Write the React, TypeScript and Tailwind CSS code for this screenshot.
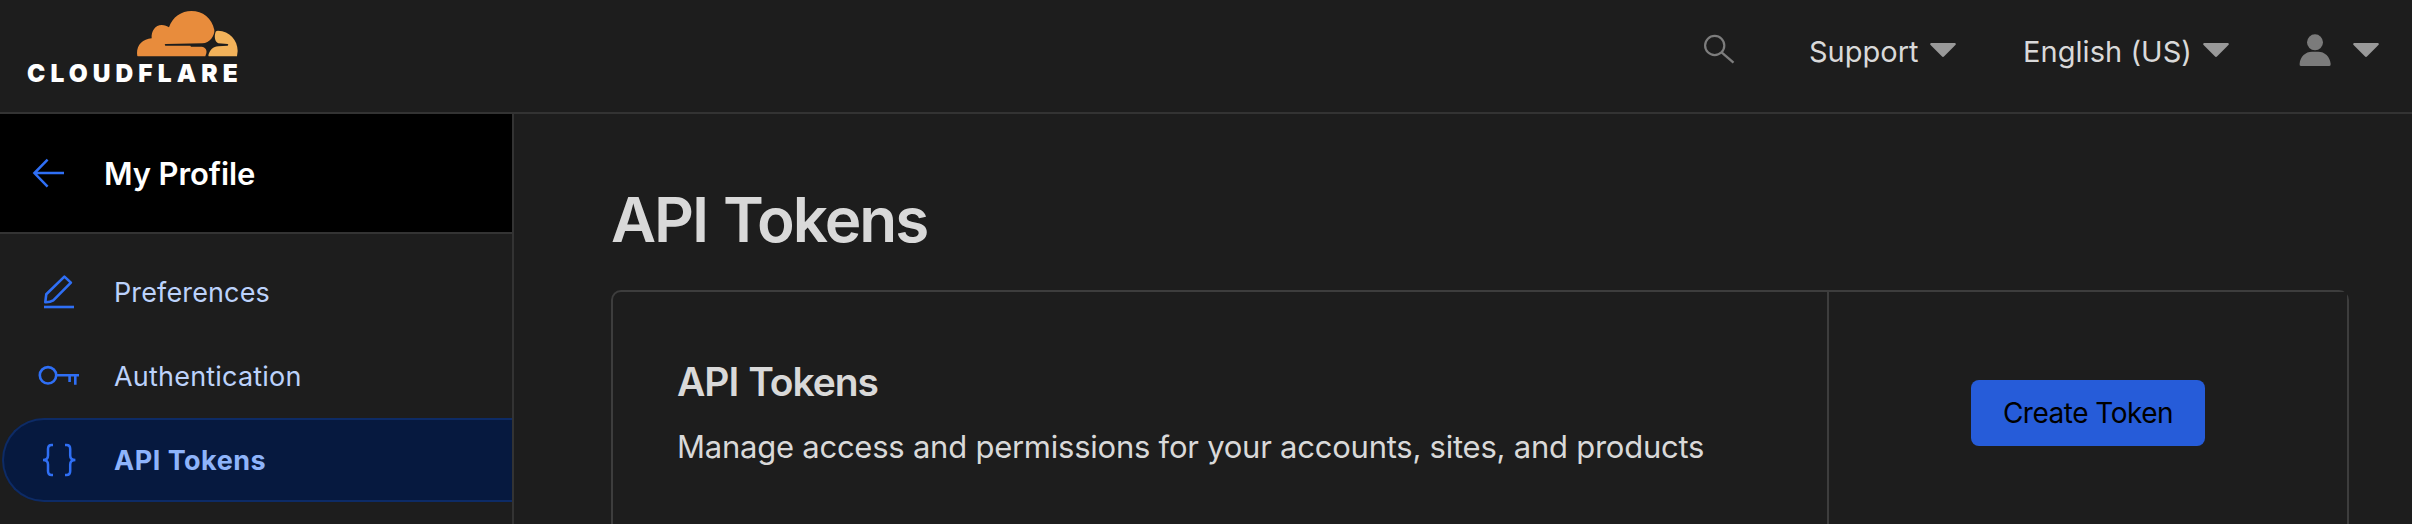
import React from "react";

function CloudLogo() {
  return (
    <div className="flex w-[250px] flex-col pt-[11px] pl-7">
      <svg className="ml-[109px] block h-[46px] w-[101px]" viewBox="412 33 303 138" aria-hidden="true">
        <path
          fill="#e88c3c"
          d="M415 169 Q412 169 412 160 C412 134 430 117 456 115 C454 93 467 75 486 75 C495 75 503 78 508 82 C518 51 546 33 575 33 C609 33 637 54 644 90 C646 106 630 130 608 130 L497 132 Q493 134.5 497 137 L572 137.5 L574 140 L606 140 C617 141 623 150 620 160 L617 169 Z"
        />
        <path
          fill="#f2b25a"
          d="M648 95 Q650 92 655 92 C690 93 714 120 714 153 L712 169 H627 L626 166 C631 149 640 140 656 139 L684 137 Q688 134.5 684 132 L656 130 C645 125 643 108 648 95 Z"
        />
      </svg>
      <span className="mt-[4px] -ml-px text-[24.5px] leading-[25px] font-black tracking-[5.1px] whitespace-nowrap text-white">
        CLOUDFLARE
      </span>
    </div>
  );
}

function Caret() {
  return (
    <svg className="h-[14px] w-[26px] shrink-0" viewBox="0 0 26 14" fill="#999999" aria-hidden="true">
      <path d="M1 0H25Q26.5 0.6 25.4 2L14.2 13.3Q13 14.5 11.8 13.3L0.6 2Q-0.5 0.6 1 0Z" />
    </svg>
  );
}

function PencilIcon() {
  return (
    <svg className="h-11 w-11" viewBox="38 270 44 44" fill="none" stroke="#2f6ff5" strokeWidth="2.6" strokeLinejoin="round">
      <path d="M45.3 302.2L46.3 294.2L64.4 276.6L70.9 282.6L53.3 300.4Q50 302.4 45.3 302.2Z" />
      <path d="M44 307H74" />
    </svg>
  );
}

function KeyIcon() {
  return (
    <svg className="h-11 w-11" viewBox="38 354 44 44" fill="none" stroke="#2f6ff5" strokeWidth="2.6">
      <circle cx="48" cy="375.3" r="8.2" />
      <path d="M56.5 375.2H79M69.6 375V382M75.3 375V384.7" />
    </svg>
  );
}

function BracesIcon() {
  return (
    <svg className="h-11 w-11" viewBox="38 438 44 44" fill="none" stroke="#2f6ff5" strokeWidth="2.5">
      <path d="M53 445H51.6Q48 445 48 449V455.5Q48 460 43 460Q48 460 48 464.5V471Q48 475 51.6 475H53" />
      <path d="M65 445H66.6Q70.2 445 70.2 449V455.5Q70.2 460 75.4 460Q70.2 460 70.2 464.5V471Q70.2 475 66.6 475H65" />
    </svg>
  );
}

function Header() {
  return (
    <header className="flex h-[114px] shrink-0 items-start justify-between border-b-2 border-[#333333]">
      <CloudLogo />
      <div className="flex h-[100px] items-center pr-[33px] text-[29px] leading-[36px] text-[#d9d9d9]">
        <svg className="mr-[69px] h-9 w-10" viewBox="1700 32 40 36" fill="none" stroke="#7d7d7d" strokeWidth="2.2" aria-hidden="true">
          <circle cx="1714.7" cy="45.5" r="9.6" />
          <path d="M1721.6 52.4L1733.5 62.6" strokeWidth="2.4" />
        </svg>
        <div className="mr-[67px] flex items-center">
          <span className="w-[121px] pt-[3px] whitespace-nowrap">Support</span>
          <Caret />
        </div>
        <div className="mr-[70px] flex items-center">
          <span className="w-[180px] pt-[3px] tracking-[0.05px] whitespace-nowrap">English (US)</span>
          <Caret />
        </div>
        <div className="flex items-center gap-[22px]">
          <svg className="h-8 w-8" viewBox="2299 34 32 32" fill="#7b7b7b" aria-hidden="true">
            <circle cx="2315" cy="42.3" r="8" />
            <path d="M2300.8 66Q2299.4 66 2299.6 64C2300.2 56.5 2305.6 51.8 2312 51.8H2318.2C2324.6 51.8 2330 56.5 2330.7 64Q2330.8 66 2329.4 66Z" />
          </svg>
          <Caret />
        </div>
      </div>
    </header>
  );
}

function Sidebar() {
  return (
    <aside className="w-[514px] shrink-0 border-r-2 border-[#333333]">
      <div className="flex h-[120px] items-center border-b-2 border-[#333333] bg-black pl-8">
        <svg className="h-8 w-[34px]" viewBox="32 157 34 32" fill="none" stroke="#2f6ff5" strokeWidth="2.5" aria-hidden="true">
          <path d="M64 173H34.6M47.6 159.6L34.4 173L47.6 186.6" />
        </svg>
        <span className="ml-[38px] pt-px text-[31px] leading-[40px] font-semibold tracking-[-0.1px] text-white">My Profile</span>
      </div>
      <nav className="pt-4 text-[27px] leading-[36px] text-[#bcd2fb]">
        <a className="flex h-[84px] items-center gap-8 pl-[38px] tracking-[0.13px]">
          <PencilIcon />
          <span className="pt-0.5">Preferences</span>
        </a>
        <a className="flex h-[84px] items-center gap-8 pl-[38px] tracking-[0.2px]">
          <KeyIcon />
          <span className="pt-0.5">Authentication</span>
        </a>
        <a className="ml-0.5 flex h-[84px] items-center gap-8 rounded-l-full border-2 border-r-0 border-[#0d2b66] bg-[#06193f] pl-[34px] font-bold tracking-[0.5px] text-[#8eb4fb]">
          <BracesIcon />
          <span className="pt-0.5">API Tokens</span>
        </a>
      </nav>
    </aside>
  );
}

export default function App() {
  return (
    <div className="flex h-[524px] w-full flex-col overflow-hidden bg-[#1d1d1d] font-['Inter',sans-serif] text-[#d9d9d9]">
      <Header />
      <div className="flex min-h-0 flex-1">
        <Sidebar />
        <main className="flex-1 pt-[66px] pr-[63px] pl-[97px]">
          <h1 className="text-[62px] leading-[80px] font-semibold tracking-[-2px] [word-spacing:2px]">API Tokens</h1>
          <section className="mt-[30px] flex h-[246px] rounded-[10px] border-2 border-[#3d3d3d]">
            <div className="flex-1 px-16 pt-[66px]">
              <h2 className="text-[39px] leading-[48px] font-semibold tracking-[-1.05px] [word-spacing:1.2px]">API Tokens</h2>
              <p className="mt-[18px] text-[31px] leading-[46px] tracking-[-0.24px] whitespace-nowrap">
                Manage access and permissions for your accounts, sites, and products
              </p>
            </div>
            <div className="flex w-[520px] items-center justify-center border-l-2 border-[#3d3d3d] bg-[#1d1d1d]">
              <button className="h-[66px] w-[234px] rounded-[8px] bg-[#265cd9] text-[28px] leading-[36px] tracking-[-0.5px] text-black">
                Create Token
              </button>
            </div>
          </section>
        </main>
      </div>
    </div>
  );
}
